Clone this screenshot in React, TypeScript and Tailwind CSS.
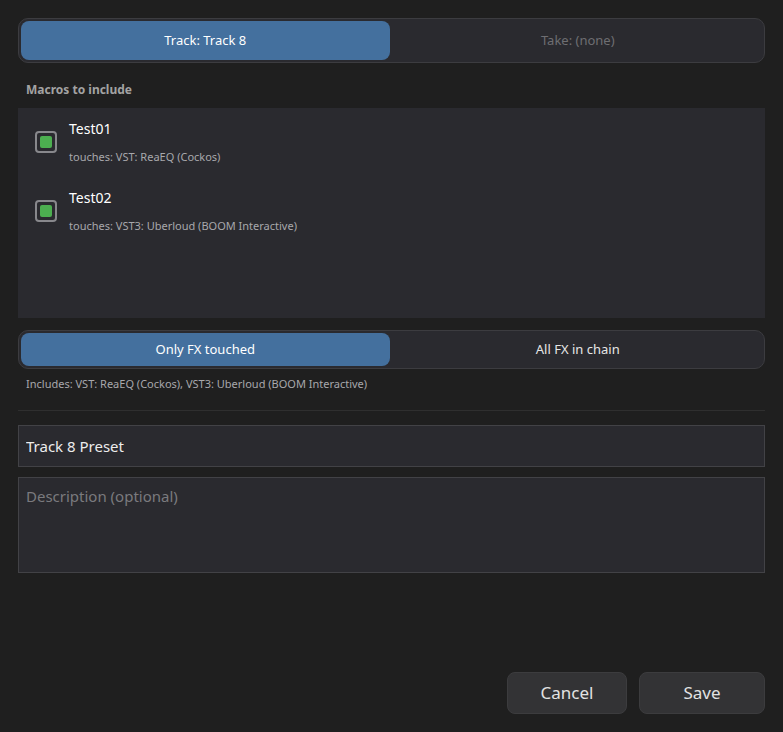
import { useState } from 'react'

type Macro = { name: string; touches: string }

const MACROS: Macro[] = [
  { name: 'Test01', touches: 'touches: VST: ReaEQ (Cockos)' },
  { name: 'Test02', touches: 'touches: VST3: Uberloud (BOOM Interactive)' },
]

function Segmented({
  options,
  active,
  onChange,
  dimInactive,
  tall,
}: {
  options: string[]
  active: number
  onChange: (i: number) => void
  dimInactive?: boolean
  tall?: boolean
}) {
  return (
    <div className={`flex gap-[4px] p-[2px] rounded-[10px] border border-[#3c3c40] bg-[#2a2a2f] ${tall ? 'h-[45px]' : 'h-[39px]'}`}>
      {options.map((o, i) => (
        <button
          key={o}
          onClick={() => onChange(i)}
          className={`flex-1 rounded-[8px] text-[13px] ${
            i === active
              ? 'bg-[#44709e] text-white'
              : dimInactive
                ? 'text-[#6e6e72]'
                : 'text-[#e6e6e6]'
          }`}
        >
          {o}
        </button>
      ))}
    </div>
  )
}

function Check({ on }: { on: boolean }) {
  return (
    <div className="w-[22px] h-[22px] rounded-[4px] border-2 border-[#88888c] flex items-center justify-center">
      {on && <div className="w-[12px] h-[12px] rounded-[2px] bg-[#4caf50]" />}
    </div>
  )
}

export default function App() {
  const [scope, setScope] = useState(0)
  const [fx, setFx] = useState(0)
  const [name, setName] = useState('Track 8 Preset')

  return (
    <div
      className="h-[732px] bg-[#1f1f1f] px-[18px] pt-[18px] pb-[18px] flex flex-col text-[#e6e6e6]"
      style={{ fontFamily: '"Noto Sans", "Open Sans", sans-serif' }}
    >
      <Segmented
        options={['Track: Track 8', 'Take: (none)']}
        active={scope}
        onChange={setScope}
        dimInactive
        tall
      />

      <div className="mt-[19px] pl-[8px] text-[12px] font-bold text-[#a3a3a3] leading-[16px]">Macros to include</div>

      <div className="mt-[10px] h-[210px] bg-[#2a2a2f] pl-[17px] pt-[11px] flex flex-col gap-[24px]">
        {MACROS.map((m) => (
          <div key={m.name} className="flex items-center gap-[12px]">
            <Check on />
            <div className="flex flex-col">
              <div className="text-[14px] leading-[19px] text-white">{m.name}</div>
              <div className="mt-[11px] text-[11px] leading-[15px] text-[#a8a8ac]">{m.touches}</div>
            </div>
          </div>
        ))}
      </div>

      <div className="mt-[12px]">
        <Segmented options={['Only FX touched', 'All FX in chain']} active={fx} onChange={setFx} />
      </div>

      <div className="mt-[7px] pl-[8px] text-[11px] leading-[15px] text-[#a8a8ac]">
        Includes: VST: ReaEQ (Cockos), VST3: Uberloud (BOOM Interactive)
      </div>

      <div className="mt-[19px] h-px bg-[#2f2f2f]" />

      <input
        value={name}
        onChange={(e) => setName(e.target.value)}
        className="mt-[14px] h-[42px] bg-[#2a2a2f] border border-[#424246] px-[7px] text-[15px] text-[#ececec] outline-none"
      />

      <textarea
        placeholder="Description (optional)"
        className="mt-[10px] h-[96px] bg-[#2a2a2f] border border-[#424246] px-[7px] py-[8px] text-[15px] leading-[20px] text-[#ececec] placeholder:text-[#7a7a7e] outline-none resize-none"
      />

      <div className="mt-auto flex justify-end gap-[12px]">
        <button className="w-[120px] h-[42px] rounded-[8px] bg-[#333335] border border-[#3c3c3e] text-[17px] text-[#e2e2e2]">
          Cancel
        </button>
        <button className="w-[126px] h-[42px] rounded-[8px] bg-[#333335] border border-[#3c3c3e] text-[17px] text-[#e2e2e2]">
          Save
        </button>
      </div>
    </div>
  )
}
